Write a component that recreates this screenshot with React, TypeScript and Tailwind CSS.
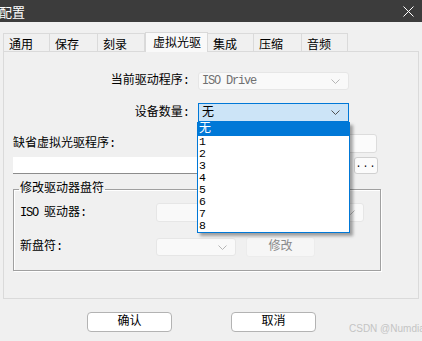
import React from "react";

const Chevron = ({ color = "#a8a8a8" }: { color?: string }) => (
  <svg width="9" height="5" viewBox="0 0 9 5" className="shrink-0">
    <path d="M0.5 0.5 L4.5 4.5 L8.5 0.5" fill="none" stroke={color} strokeWidth="1" />
  </svg>
);

const tabs = [
  { t: "通用", w: "w-[47px]", sel: false },
  { t: "保存", w: "w-[48px]", sel: false },
  { t: "刻录", w: "w-[47px]", sel: false },
  { t: "虚拟光驱", w: "w-[63px]", sel: true },
  { t: "集成", w: "w-[46px]", sel: false },
  { t: "压缩", w: "w-[48px]", sel: false },
  { t: "音频", w: "w-[46px]", sel: false },
];

const items = ["1", "2", "3", "4", "5", "6", "7", "8"];

export default function App() {
  return (
    <div className="w-[422px] h-[341px] bg-[#f0f0f0] relative overflow-hidden text-[12px] text-black [font-family:'Liberation_Mono','Noto_Sans_CJK_SC',monospace]">
      {/* title bar */}
      <div className="h-[22px] bg-[#3c3c3c] flex items-center justify-between text-white text-[13px] [font-family:'Noto_Sans_CJK_SC',sans-serif]">
        <span className="leading-none -ml-px">配置</span>
        <svg width="11" height="11" viewBox="0 0 11 11" className="mr-[8px]">
          <path d="M0.5 0.5 L10.5 10.5 M10.5 0.5 L0.5 10.5" stroke="#ffffff" strokeWidth="1" />
        </svg>
      </div>

      {/* tabs */}
      <div className="flex items-end h-[19px] mt-[10px] ml-[3px] relative z-10">
        {tabs.map((tab, i) => (
          <div
            key={tab.t}
            className={
              tab.sel
                ? `${tab.w} h-[20px] -mb-px bg-[#f9f9f9] border-t border-x border-[#d9d9d9] pl-[7px] leading-[18px] [font-family:'Noto_Sans_CJK_SC',sans-serif]`
                : `${tab.w} h-[18px] bg-[#f0f0f0] border-t border-r ${i === 0 ? "border-l" : ""} border-[#dadada] pl-[5px] leading-[19px] [font-family:'Noto_Sans_CJK_SC',sans-serif]`
            }
          >
            {tab.t}
          </div>
        ))}
      </div>

      {/* panel */}
      <div className="mx-[3px] h-[248px] border border-[#dadada] bg-[#f0f0f0] flex flex-col">
        {/* row 1 */}
        <div className="mt-[20px] h-[18px] flex items-center">
          <div className="w-[186px] text-right">当前驱动程序:</div>
          <div className="ml-[8px] w-[151px] h-[18px] bg-[#f9f9f9] border border-[#e6e6e6] rounded-[3px] flex items-center justify-between pl-[3px] pr-[8px]">
            <span className="text-[#707070] tracking-[-1.2px]">ISO Drive</span>
            <Chevron color="#b5b5b5" />
          </div>
        </div>

        {/* row 2 */}
        <div className="mt-[13px] h-[19px] flex items-center">
          <div className="w-[186px] text-right">设备数量:</div>
          <div className="ml-[8px] w-[151px] h-[19px] relative">
            <div className="w-full h-full bg-[#cce4f7] border border-[#0078d7] flex items-center justify-between pl-[3px] pr-[8px]">
              <span>无</span>
              <Chevron color="#505050" />
            </div>
            <div className="absolute left-[-1px] top-[19px] w-[153px] bg-white border border-[#0078d7] shadow-[3px_3px_3px_rgba(0,0,0,0.35)] z-20">
              <div className="h-[13px] bg-[#0078d7] text-white leading-[13px] pl-px">无</div>
              {items.map((n) => (
                <div key={n} className="h-[12px] leading-[12px] text-[11.5px] pl-px">
                  {n}
                </div>
              ))}
            </div>
          </div>
        </div>

        {/* row 3 */}
        <div className="mt-[12px] h-[19px] flex items-center">
          <div className="ml-[9px]">缺省虚拟光驱程序:</div>
          <div className="ml-auto mr-[41px] w-[90px] h-[19px] bg-[#fbfbfb] border border-[#dcdcdc] rounded-[3px]" />
        </div>

        {/* row 4 */}
        <div className="mt-[4px] h-[17px] flex items-center">
          <div className="ml-[9px] w-[337px] h-[17px] bg-white border-b border-[#8c8c8c]" />
          <div className="ml-[4px] w-[24px] h-[17px] bg-[#fbfbfb] border border-[#d0d0d0] rounded-[3px] flex items-end justify-center pb-[3px] text-[10px] leading-none tracking-[1px]">
            ...
          </div>
        </div>

        {/* group */}
        <fieldset className="mt-[8px] ml-[9px] w-[368px] border border-[#a0a0a0] pl-[5px] pr-[6px] pb-[13px] shadow-[inset_1px_1px_0_#ffffff,1px_1px_0_#ffffff]">
          <legend className="px-px leading-[14px]">修改驱动器盘符</legend>
          <div className="mt-[7px] h-[19px] flex items-center">
            <div className="w-[137px] pl-px">
              <span className="tracking-[-1.2px]">ISO </span>驱动器:
            </div>
            <div className="w-[208px] h-[19px] bg-[#f9f9f9] border border-[#e6e6e6] rounded-[3px] flex items-center justify-end pr-[8px]">
              <Chevron color="#b5b5b5" />
            </div>
          </div>
          <div className="mt-[15px] h-[20px] flex items-center">
            <div className="w-[137px] pl-px">新盘符:</div>
            <div className="w-[80px] h-[18px] bg-[#f9f9f9] border border-[#e6e6e6] rounded-[3px] flex items-center justify-end pr-[8px]">
              <Chevron color="#b5b5b5" />
            </div>
            <div className="ml-[10px] w-[69px] h-[20px] bg-[#f6f6f6] border border-[#ececec] rounded-[3px] flex items-center justify-center text-[#8a8a8a]">
              修改
            </div>
          </div>
        </fieldset>
      </div>

      {/* buttons */}
      <div className="mt-[13px] flex">
        <div className="ml-[87px] w-[85px] h-[20px] bg-white border border-[#b3b3b3] rounded-[4px] flex items-center justify-center">
          确认
        </div>
        <div className="ml-[59px] w-[85px] h-[20px] bg-white border border-[#b3b3b3] rounded-[4px] flex items-center justify-center">
          取消
        </div>
      </div>

      <div className="absolute left-[349px] top-[323px] whitespace-nowrap text-[10px] leading-[12px] text-[#c4c4c4] [font-family:'Liberation_Sans',sans-serif]">
        CSDN @Numdia
      </div>
    </div>
  );
}
